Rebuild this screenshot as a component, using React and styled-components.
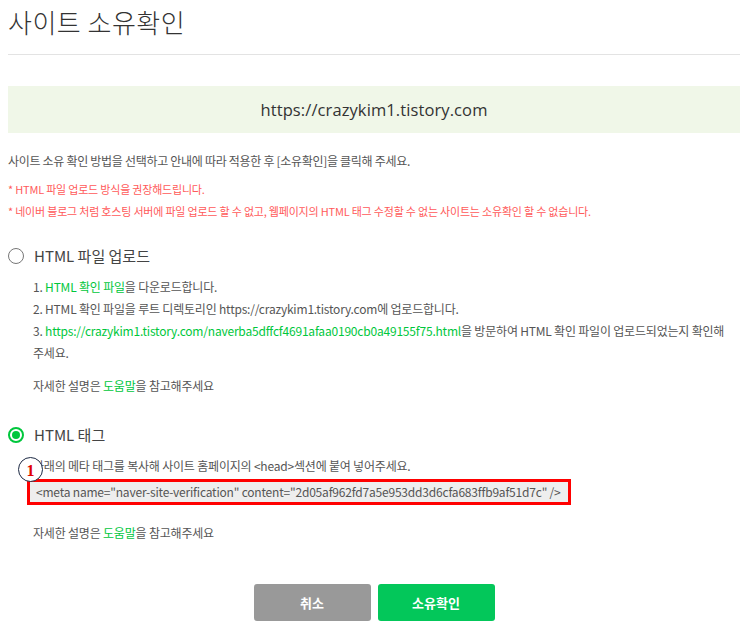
import React from "react";
import styled, { createGlobalStyle } from "styled-components";

const Global = createGlobalStyle`
  html, body { margin: 0; padding: 0; background: #fff; }
  body { font-family: "Noto Sans CJK KR", "Noto Sans", sans-serif; color: #555; }
`;

const Page = styled.div`
  width: 744px;
  box-sizing: border-box;
  padding: 0 4px 0 8px;
`;

const Title = styled.h1`
  margin: 0;
  padding-top: 1px;
  height: 53px;
  font-size: 26px;
  font-weight: 300;
  line-height: 42px;
  color: #333;
  letter-spacing: 0.5px;
`;

const Divider = styled.hr`
  margin: 0;
  border: 0;
  border-top: 1px solid #e3e3e3;
`;

const UrlBox = styled.div`
  margin-top: 31px;
  height: 47px;
  background: #f0f7e8;
  display: flex;
  align-items: center;
  justify-content: center;
  font-family: "Open Sans", "Noto Sans CJK KR", sans-serif;
  font-size: 16.5px;
  color: #333;
  letter-spacing: 0.1px;
`;

const Lead = styled.p`
  margin: 19px 0 0;
  font-size: 12px;
  line-height: 18px;
  color: #555;
  letter-spacing: -0.3px;
`;

const Notes = styled.div`
  margin-top: 10px;
  display: flex;
  flex-direction: column;
  gap: 4px;
`;

const Note = styled.p`
  margin: 0;
  font-size: 11px;
  line-height: 18px;
  color: #ff5a5a;
  letter-spacing: -0.2px;
`;

const Section = styled.section`
  margin-top: ${(p) => p.$top}px;
`;

const RadioRow = styled.label`
  display: flex;
  align-items: center;
  gap: 10px;
  font-size: 15px;
  line-height: 24px;
  color: #444;
`;

const Radio = styled.span`
  width: 16px;
  height: 16px;
  box-sizing: border-box;
  border-radius: 50%;
  border: ${(p) => (p.$on ? "2px solid #00c73c" : "1.5px solid #777")};
  display: flex;
  align-items: center;
  justify-content: center;
  &::after {
    content: "";
    display: ${(p) => (p.$on ? "block" : "none")};
    width: 8px;
    height: 8px;
    border-radius: 50%;
    background: #00c73c;
  }
`;

const Body = styled.div`
  position: relative;
  padding-left: 25px;
  margin-top: ${(p) => p.$top}px;
  font-size: 12px;
  line-height: 22px;
  color: #555;
  letter-spacing: -0.2px;
`;

const Line = styled.p`
  margin: 0;
`;

const Green = styled.span`
  color: #00c73c;
`;

const Help = styled.p`
  margin: ${(p) => p.$top}px 0 0;
  font-size: 12px;
  line-height: 22px;
  color: #555;
`;

const MetaBox = styled.div`
  margin: 2px 0 0 -6px;
  width: 544px;
  height: 26px;
  box-sizing: border-box;
  border: 3px solid #ff0000;
  background: #eeeeee;
  display: flex;
  align-items: center;
  padding-left: 6px;
  font-size: 12px;
  color: #555;
  white-space: nowrap;
`;

const Badge = styled.span`
  position: absolute;
  left: 10px;
  top: 2px;
  width: 25px;
  height: 25px;
  box-sizing: border-box;
  border-radius: 50%;
  border: 1.5px solid #1d2a44;
  background: #fff;
  display: flex;
  align-items: center;
  justify-content: center;
  padding-top: 2px;
  font-family: "Liberation Serif", "DejaVu Serif", serif;
  font-weight: 700;
  font-size: 16px;
  line-height: 1;
  color: #e00000;
`;

const Buttons = styled.div`
  margin-top: 40px;
  display: flex;
  justify-content: center;
  gap: 7px;
`;

const Button = styled.button`
  width: 117px;
  height: 37px;
  border: 0;
  border-radius: 3px;
  background: ${(p) => (p.$primary ? "#03c75a" : "#999999")};
  color: #fff;
  font-family: "Noto Sans CJK KR", sans-serif;
  font-size: 13px;
  font-weight: 700;
`;

export default function App() {
  return (
    <Page>
      <Global />
      <Title>사이트 소유확인</Title>
      <Divider />
      <UrlBox>https://crazykim1.tistory.com</UrlBox>
      <Lead>사이트 소유 확인 방법을 선택하고 안내에 따라 적용한 후 [소유확인]을 클릭해 주세요.</Lead>
      <Notes>
        <Note>* HTML 파일 업로드 방식을 권장해드립니다.</Note>
        <Note>* 네이버 블로그 처럼 호스팅 서버에 파일 업로드 할 수 없고, 웹페이지의 HTML 태그 수정할 수 없는 사이트는 소유확인 할 수 없습니다.</Note>
      </Notes>

      <Section $top={24}>
        <RadioRow>
          <Radio />
          HTML 파일 업로드
        </RadioRow>
        <Body $top={8}>
          <Line>1. <Green>HTML 확인 파일</Green>을 다운로드합니다.</Line>
          <Line>2. HTML 확인 파일을 루트 디렉토리인 https://crazykim1.tistory.com에 업로드합니다.</Line>
          <Line>
            3. <Green>https://crazykim1.tistory.com/naverba5dffcf4691afaa0190cb0a49155f75.html</Green>을 방문하여 HTML 확인 파일이 업로드되었는지 확인해
            <br />
            주세요.
          </Line>
          <Help $top={11}>자세한 설명은 <Green>도움말</Green>을 참고해주세요</Help>
        </Body>
      </Section>

      <Section $top={26}>
        <RadioRow>
          <Radio $on />
          HTML 태그
        </RadioRow>
        <Body $top={8}>
          <Line>아래의 메타 태그를 복사해 사이트 홈페이지의 &lt;head&gt;섹션에 붙여 넣어주세요.</Line>
          <Badge>1</Badge>
          <MetaBox>&lt;meta name="naver-site-verification" content="2d05af962fd7a5e953dd3d6cfa683ffb9af51d7c" /&gt;</MetaBox>
          <Help $top={17}>자세한 설명은 <Green>도움말</Green>을 참고해주세요</Help>
        </Body>
      </Section>

      <Buttons>
        <Button>취소</Button>
        <Button $primary>소유확인</Button>
      </Buttons>
    </Page>
  );
}
